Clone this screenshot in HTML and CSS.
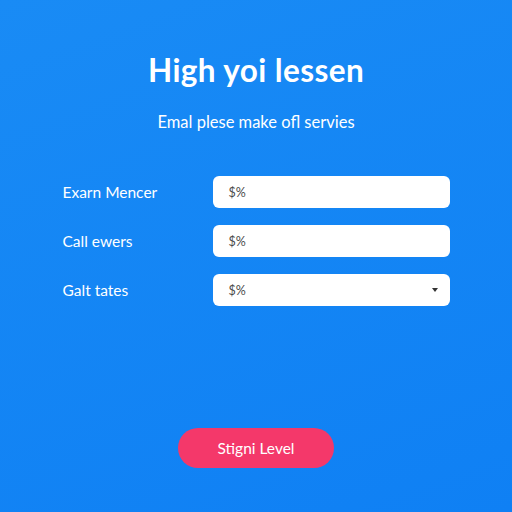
FILE: index.html
```html
<!DOCTYPE html>
<html>
<head>
<meta charset="utf-8">
<link rel="stylesheet" href="styles.css">
</head>
<body>
<main class="page">
  <h1 class="title">High yoi lessen</h1>
  <p class="subtitle">Emal plese make ofl servies</p>
  <form class="form">
    <div class="row">
      <label class="label">Exarn Mencer</label>
      <div class="field">$%</div>
    </div>
    <div class="row">
      <label class="label">Call ewers</label>
      <div class="field">$%</div>
    </div>
    <div class="row">
      <label class="label">Galt tates</label>
      <div class="field select">$%<span class="caret"></span></div>
    </div>
  </form>
  <button class="btn" type="button">Stigni Level</button>
</main>
</body>
</html>
```
FILE: styles.css
```css
html, body {
  margin: 0;
  padding: 0;
}
body {
  width: 512px;
  height: 512px;
  overflow: hidden;
  background: linear-gradient(160deg, #198bf5 0%, #0f80f4 100%);
  font-family: Lato, "Open Sans", sans-serif;
  color: #fff;
}
.page {
  height: 512px;
  display: flex;
  flex-direction: column;
  align-items: center;
  box-sizing: border-box;
  padding-top: 52px;
}
.title {
  margin: 0;
  font-size: 31.5px;
  font-weight: 700;
  line-height: 36px;
  letter-spacing: 0.4px;
}
.subtitle {
  margin: 24px 0 0 0;
  font-size: 16.5px;
  line-height: 20px;
}
.form {
  margin-top: 44px;
  width: 387px;
  display: flex;
  flex-direction: column;
  gap: 17px;
}
.row {
  display: flex;
  align-items: center;
  justify-content: space-between;
}
.label {
  font-size: 15.5px;
}
.field {
  width: 237px;
  height: 32px;
  box-sizing: border-box;
  background: #fff;
  border-radius: 6px;
  color: #4a4a4a;
  font-size: 12.5px;
  padding-left: 16px;
  display: flex;
  align-items: center;
  position: relative;
}
.caret {
  position: absolute;
  right: 12px;
  top: 14px;
  width: 0;
  height: 0;
  border-left: 3.5px solid transparent;
  border-right: 3.5px solid transparent;
  border-top: 4px solid #333;
}
.btn {
  margin-top: 122px;
  width: 156px;
  height: 40px;
  border: none;
  border-radius: 20px;
  background: #f4386a;
  color: #fff;
  font-family: Lato, "Open Sans", sans-serif;
  font-size: 15.5px;
}
```
